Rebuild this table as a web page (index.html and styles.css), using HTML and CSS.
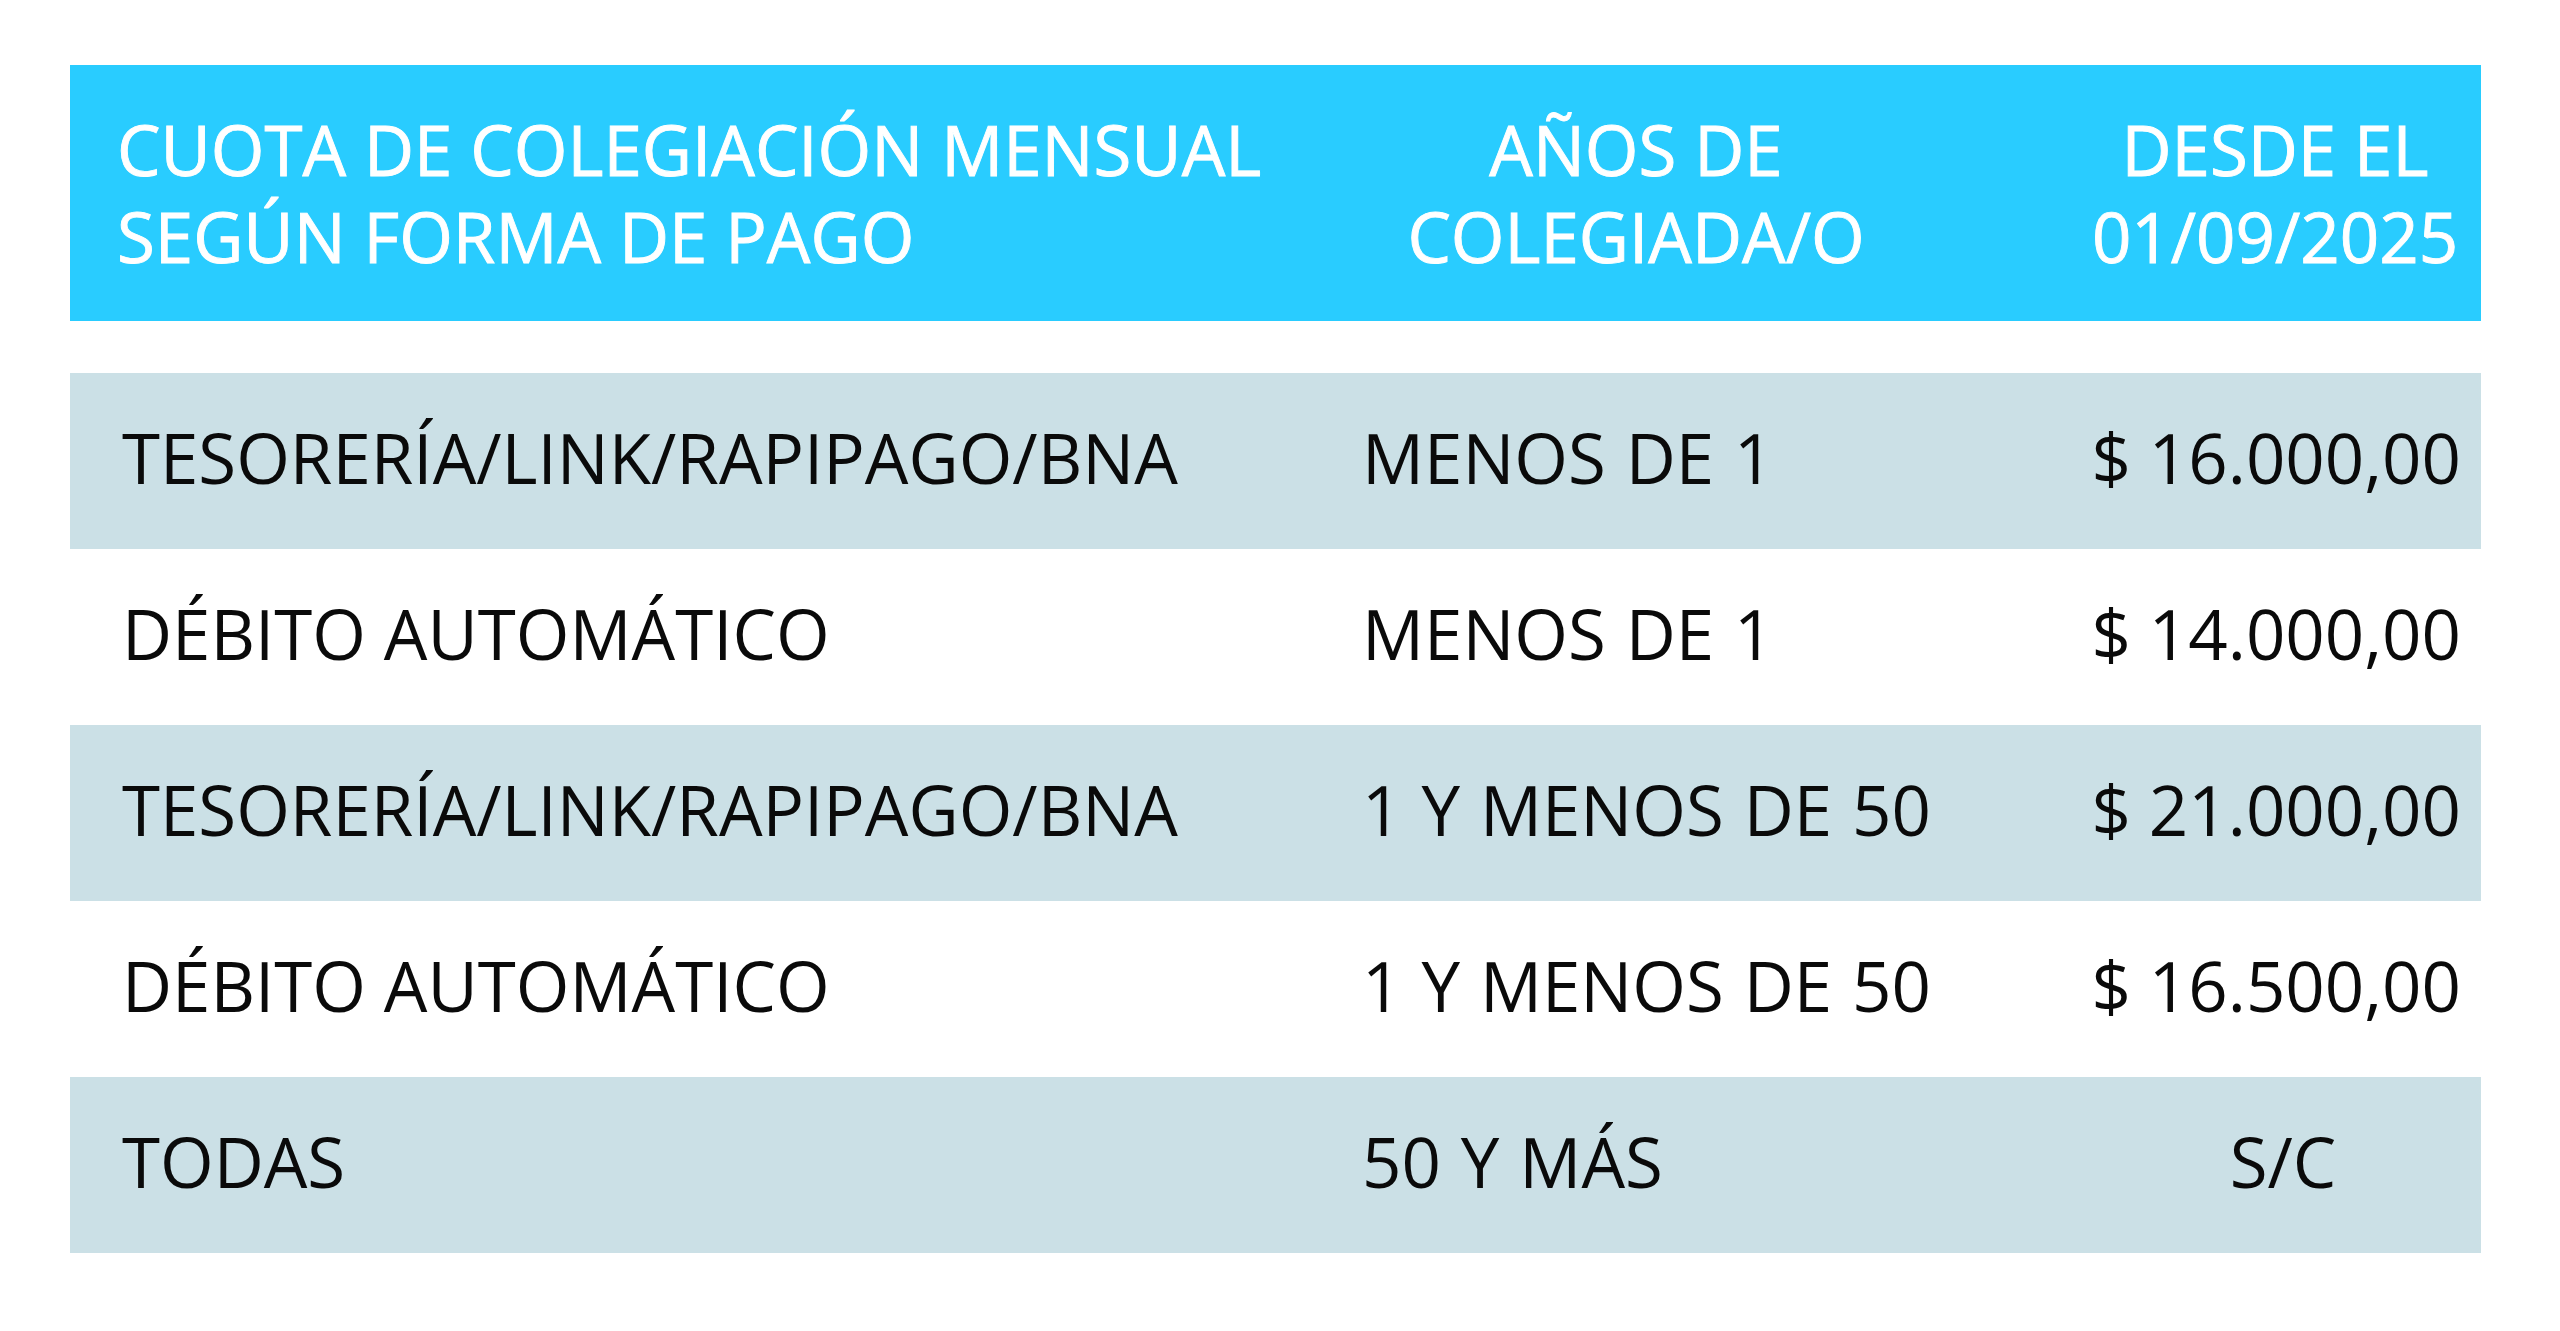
FILE: index.html
```html
<!DOCTYPE html>
<html lang="es">
<head>
<meta charset="utf-8">
<title>Cuota de colegiación</title>
<link rel="stylesheet" href="styles.css">
</head>
<body>
<main class="page">
  <div class="table">
    <div class="row head">
      <div class="cell c1">CUOTA DE COLEGIACIÓN MENSUAL<br>SEGÚN FORMA DE PAGO</div>
      <div class="cell c2">AÑOS DE<br>COLEGIADA/O</div>
      <div class="cell c3">DESDE EL<br>01/09/2025</div>
    </div>
    <div class="body">
      <div class="row tint">
        <div class="cell c1">TESORERÍA/LINK/RAPIPAGO/BNA</div>
        <div class="cell c2">MENOS DE 1</div>
        <div class="cell c3 money">$ 16.000,00</div>
      </div>
      <div class="row">
        <div class="cell c1">DÉBITO AUTOMÁTICO</div>
        <div class="cell c2">MENOS DE 1</div>
        <div class="cell c3 money">$ 14.000,00</div>
      </div>
      <div class="row tint">
        <div class="cell c1">TESORERÍA/LINK/RAPIPAGO/BNA</div>
        <div class="cell c2">1 Y MENOS DE 50</div>
        <div class="cell c3 money">$ 21.000,00</div>
      </div>
      <div class="row">
        <div class="cell c1">DÉBITO AUTOMÁTICO</div>
        <div class="cell c2">1 Y MENOS DE 50</div>
        <div class="cell c3 money">$ 16.500,00</div>
      </div>
      <div class="row tint">
        <div class="cell c1">TODAS</div>
        <div class="cell c2">50 Y MÁS</div>
        <div class="cell c3 center">S/C</div>
      </div>
    </div>
  </div>
</main>
</body>
</html>
```
FILE: styles.css
```css
html, body {
  margin: 0;
  padding: 0;
  background: #ffffff;
}
.page {
  padding: 65px 79px 0 70px;
  font-family: "Open Sans", "Noto Sans", sans-serif;
}
.table {
  width: 2411px;
  display: flex;
  flex-direction: column;
  gap: 52px;
}
.row {
  display: grid;
  grid-template-columns: 1137px 858px 416px;
  height: 176px;
  align-items: center;
  color: #0a0a0a;
  font-size: 69px;
  line-height: 1;
}
.body .cell {
  padding-bottom: 8px;
}
.row.tint {
  background: #cbe0e6;
}
.row.head {
  height: 256px;
  background: #29ccff;
  color: #ffffff;
  font-size: 69px;
  line-height: 87px;
  -webkit-text-stroke: 0.9px #ffffff;
}
.head .c1 {
  padding-left: 47px;
  white-space: nowrap;
}
.head .c2,
.head .c3 {
  text-align: center;
  white-space: nowrap;
}
.head .c3 {
  padding-left: 4px;
}
.body {
  display: flex;
  flex-direction: column;
}
.c1 {
  padding-left: 52px;
  white-space: nowrap;
}
.body .c2 {
  padding-left: 155px;
  white-space: nowrap;
  word-spacing: 2px;
}
.money {
  text-align: right;
  padding-right: 20px;
  white-space: nowrap;
}
.center {
  text-align: center;
  padding-left: 20px;
}
```
